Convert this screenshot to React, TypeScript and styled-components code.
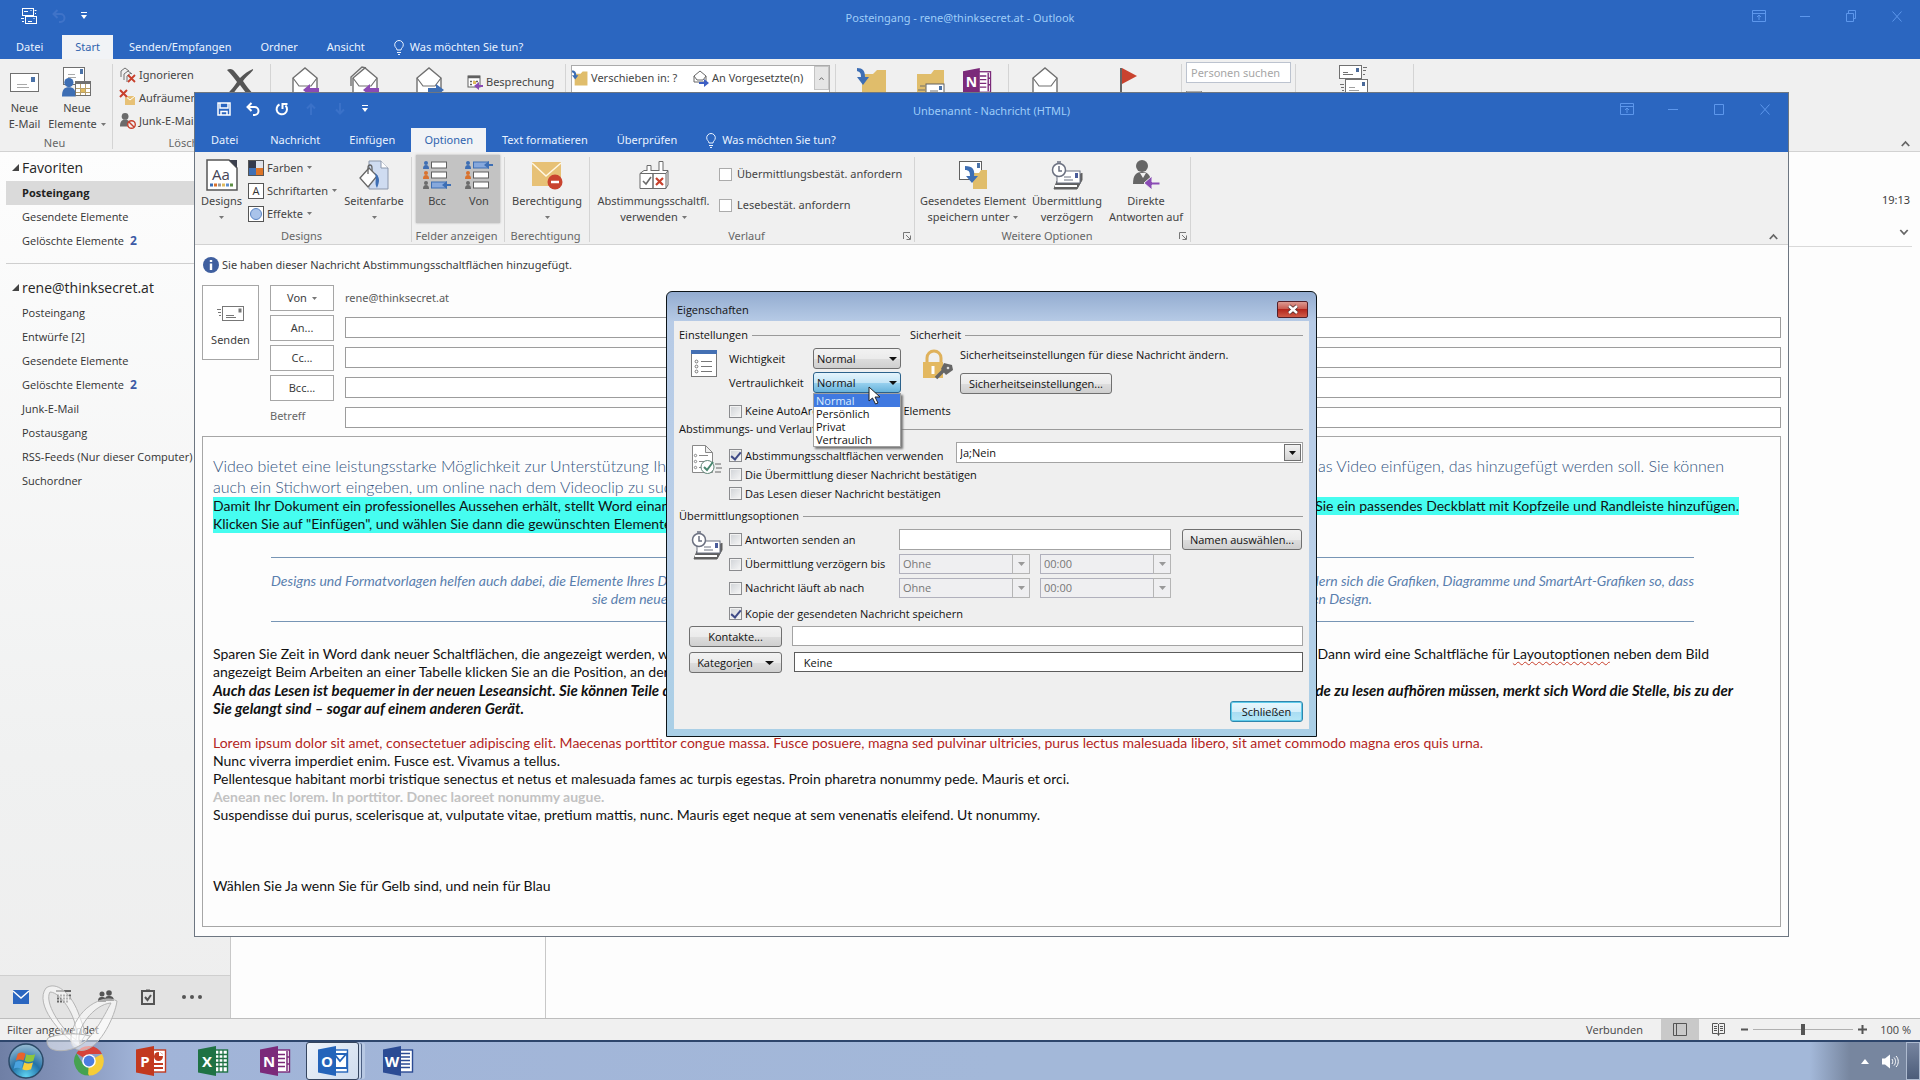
import React, { useState } from "react";
import styled, { createGlobalStyle, css } from "styled-components";

const ui = `"Noto Sans", "Open Sans", sans-serif`;
const compact = `"Open Sans", "Noto Sans", sans-serif`;
const doc = `Lato, "Open Sans", sans-serif`;
const blue = "#2b66c0";

const GlobalStyle = createGlobalStyle`
  * { box-sizing: border-box; }
  body { margin: 0; font-family: ${ui}; font-size: 11px; line-height: 16px; color: #3c3c3c; overflow: hidden; }
  button, input, select { font: inherit; color: inherit; }
  button { cursor: default; }
  ul { list-style: none; margin: 0; padding: 0; }
  p { margin: 0; }
  a { color: inherit; text-decoration: none; }
`;

/* ---------- shared pieces ---------- */

const Svg = styled.svg`
  display: block;
  flex: none;
  overflow: visible;
`;

const Screen = styled.div`
  position: relative;
  display: flex;
  flex-direction: column;
  height: 100vh;
  background: #fdfdfd;
`;

const TitleBar = styled.header`
  display: grid;
  grid-template-columns: 1fr auto 1fr;
  align-items: center;
  height: 35px;
  flex: none;
  background: ${blue};
  color: #9fcdf8;
`;

const QuickAccess = styled.div<{ $pad: number }>`
  display: flex;
  align-items: center;
  gap: 15px;
  padding: 0 0 4px ${(p) => p.$pad}px;
`;

const PlainButton = styled.button`
  display: flex;
  align-items: center;
  justify-content: center;
  padding: 0;
  border: 0;
  background: none;
`;

const Caption = styled.h1`
  margin: 0;
  font-size: 11px;
  font-weight: 400;
`;

const WindowButtons = styled.div<{ $pad: number }>`
  display: flex;
  justify-content: flex-end;
  gap: 30px;
  padding: 0 ${(p) => p.$pad}px 4px 0;
  color: #5d97ec;
`;

const TabRow = styled.nav<{ $pad?: number }>`
  display: flex;
  gap: 3px;
  height: 24px;
  flex: none;
  background: ${blue};
  color: #eaf3ff;
`;

const Tab = styled.button<{ $active?: boolean; $file?: boolean }>`
  display: flex;
  align-items: center;
  gap: 6px;
  padding: 0 ${(p) => (p.$file ? 16 : 13)}px;
  border: 0;
  background: ${(p) => (p.$active ? "#f1f3f6" : "none")};
  color: ${(p) => (p.$active ? "#2f63ae" : "inherit")};
  white-space: nowrap;
`;

const Ribbon = styled.div`
  display: flex;
  height: 93px;
  flex: none;
  background: #f0f0f0;
  border-bottom: 1px solid #d2d2d2;
  color: #444;
`;

const Group = styled.section<{ $w: number }>`
  display: flex;
  flex-direction: column;
  width: ${(p) => p.$w}px;
  flex: none;
  margin: 5px 0 2px;
  border-right: 1px solid #d4d4d4;
`;

const GroupBody = styled.div<{ $pad?: number; $gap?: number }>`
  display: flex;
  align-items: flex-start;
  flex: 1;
  min-height: 0;
  gap: ${(p) => p.$gap ?? 0}px;
  padding-left: ${(p) => p.$pad ?? 0}px;
`;

const GroupFooter = styled.div`
  display: flex;
  align-items: center;
  height: 12px;
  line-height: 12px;
  color: #666;
  padding-right: 3px;
`;

const GroupName = styled.span`
  flex: 1;
  text-align: center;
`;

const BigButton = styled.button<{ $w: number }>`
  display: flex;
  flex-direction: column;
  align-items: center;
  width: ${(p) => p.$w}px;
  padding: 0;
  border: 0;
  background: none;
  white-space: nowrap;
`;

const IconBox = styled.span`
  display: flex;
  align-items: center;
  justify-content: center;
  height: 36px;
`;

const SmallColumn = styled.div<{ $left?: number }>`
  display: flex;
  flex-direction: column;
  gap: 2px;
  padding-left: ${(p) => p.$left ?? 0}px;
`;

const SmallButton = styled.button`
  display: flex;
  align-items: center;
  gap: 3px;
  height: 21px;
  padding: 0;
  border: 0;
  background: none;
  white-space: nowrap;
`;

const LabelLine = styled.span`
  display: flex;
  align-items: center;
  gap: 4px;
  height: 16px;
`;

const Down = ({ size = 5, color = "#777" }: { size?: number; color?: string }) => (
  <Svg width={size} height={size > 6 ? 4 : 3} viewBox="0 0 6 3.6" preserveAspectRatio="none">
    <path d="M0 0h6L3 3.600z" fill={color} />
  </Svg>
);

/* ---------- small drawings ---------- */

const Envelope = ({ w = 29, h = 19 }: { w?: number; h?: number }) => (
  <Svg width={w} height={h} viewBox="0 0 29 19">
    <rect x=".5" y=".5" width="28" height="18" fill="#fff" stroke="#707070" />
    <rect x="21" y="4" width="4" height="5" fill="#4a72a8" />
    <path d="M7 11.500h10M7 14.500h12" stroke="#a9a9a9" />
  </Svg>
);

const Person = ({ x, y, s = 1, fill }: { x: number; y: number; s?: number; fill: string }) => (
  <g transform={`translate(${x} ${y}) scale(${s})`} fill={fill}>
    <circle cx="6" cy="4" r="4" />
    <path d="M0 16c0-6 2-8 6-8s6 2 6 8z" />
  </g>
);

const NewItems = () => (
  <Svg width="30" height="30" viewBox="0 0 30 30">
    <rect x="1.500" y=".5" width="21" height="17" fill="#fff" stroke="#707070" />
    <rect x="18" y="2" width="3" height="5" fill="#4a72a8" />
    <path d="M6 7.500h7M6 10.500h8" stroke="#a9a9a9" />
    <Person x={0} y={11} s={1.15} fill="#3d6eb4" />
    <rect x="13.500" y="14.500" width="15" height="14" fill="#fff" stroke="#707070" />
    <path d="M13 15.500h16" stroke="#707070" strokeWidth="3" />
    <path d="M14 21.500h14M14 25.500h14M18.500 17v11M23.500 17v11" stroke="#b9a06a" />
    <rect x="19" y="22" width="4" height="3" fill="#e0bb5e" />
  </Svg>
);

const OpenMail = ({ arrow, double }: { arrow?: string; double?: boolean }) => (
  <Svg width="30" height="32" viewBox="0 0 30 32">
    {double && <path d="M1 20V11L12 1l4 1" fill="none" stroke="#707070" strokeWidth="1.400" />}
    <path d="M3 30V12L15 2l12 10v18z" fill="#fff" stroke="#707070" strokeWidth="1.400" />
    <path d="M3 12l6 8h12l6-8" fill="none" stroke="#707070" strokeWidth="1.200" />
    {arrow === "left" && <path d="M29 22v4H20v4l-7-6 7-6v4z" fill="#8a4bb5" />}
    {arrow === "right" && <path d="M14 22v4h8v4l8-6-8-6v4z" fill="#3d6eb4" />}
  </Svg>
);

const Ignore = () => (
  <Svg width="16" height="16" viewBox="0 0 16 16" fill="none" stroke="#707070">
    <path d="M1 10V4l4-3 4 3M4 13V7l4-3 4 3M7 15V9l4-3" />
    <path d="M8 8l7 7M15 8l-7 7" stroke="#c8402c" strokeWidth="1.800" />
  </Svg>
);

const CleanUp = () => (
  <Svg width="16" height="16" viewBox="0 0 16 16">
    <path d="M5 6h10v9H5z" fill="#e7c176" />
    <path d="M5 6l5 4 5-4" fill="none" stroke="#fff" />
    <path d="M0 0l7 7M7 0L0 7" stroke="#c8402c" strokeWidth="2" />
  </Svg>
);

const Junk = () => (
  <Svg width="16" height="16" viewBox="0 0 16 16">
    <Person x={0} y={0} s={0.85} fill="#6b6b6b" />
    <circle cx="11.500" cy="11.500" r="3.800" fill="#f0f0f0" stroke="#c8402c" strokeWidth="1.400" />
    <path d="M9 9l5 5" stroke="#c8402c" strokeWidth="1.400" />
  </Svg>
);

const Meeting = () => (
  <Svg width="16" height="16" viewBox="0 0 16 16">
    <rect x="1" y="2" width="12" height="11" fill="#fff" stroke="#606060" />
    <path d="M1 3h12" stroke="#606060" strokeWidth="2.500" />
    <path d="M3 7.500h2m1 0h2m1 0h2M3 10.500h2" stroke="#606060" strokeWidth="1.500" />
    <rect x="6" y="7" width="3" height="3" fill="#e0bb5e" />
    <path d="M16 11v2h-4v3l-5-4 5-4v3z" fill="#8a4bb5" />
  </Svg>
);

const Folder = ({ s = 16, mail }: { s?: number; mail?: boolean }) => (
  <Svg width={s} height={s} viewBox="0 0 30 30">
    <path d={mail ? "M2 7h14l3-4h10v26H2z" : "M5 7h11l4-4h9v26H5z"} fill="#e0bd6b" />
    {mail ? (
      <g>
        <rect x="11" y="17" width="18" height="13" fill="#fff" stroke="#606060" />
        <path d="M5 19h5M3 23h7M15 24h8M15 27h9" stroke="#707070" />
        <rect x="24" y="19" width="3" height="4" fill="#4a72a8" />
      </g>
    ) : (
      <path d="M0 1c6 0 8 3 8 9h4l-6 8-6-8h4c0-4-1-5-4-6z" fill="#3d6eb4" />
    )}
  </Svg>
);

const Supervisor = () => (
  <Svg width="16" height="17" viewBox="0 0 16 17">
    <path d="M1 12V6l6-5 6 5v6z" fill="#fff" stroke="#666" />
    <path d="M1 6l3 4h6l3-4" fill="none" stroke="#666" />
    <path d="M6 12v2h5v3l5-4-5-4v3z" fill="#3d5fc4" />
  </Svg>
);

const OfficeLogo = ({ letter, color, size = 30 }: { letter: string; color: string; size?: number }) => (
  <Svg width={size} height={size} viewBox="0 0 30 30">
    <rect x="16" y="4" width="13.500" height="22" fill="#fff" stroke={color} strokeWidth="1.400" />
    {letter === "O" && <path d="M17 8h12v14H17zM17 9l5 6 7-8" fill="#fff" stroke={color} strokeWidth="1.800" />}
    {letter === "P" && (
      <g fill={color}>
        <circle cx="22.500" cy="10.500" r="4.500" />
        <path d="M23 10V5l5 5z" fill="#fff" />
        <path d="M18 17h9v2h-9zM18 21h9v2h-9z" />
      </g>
    )}
    {letter === "X" && (
      <path d="M17 8.500h12M17 12.500h12M17 16.500h12M17 20.500h12M21 4v22M25 4v22" stroke={color} strokeWidth="1.300" />
    )}
    {letter === "N" && (
      <path d="M18 8.500h7M18 12.500h7M18 16.500h7M18 20.500h7M27 5v20M27 11h3M27 18h3" stroke={color} strokeWidth="1.500" />
    )}
    {letter === "W" && (
      <path d="M18 7.500h9M18 11h9M18 14.500h9M18 18h9M18 21.500h9" stroke={color} strokeWidth="1.300" />
    )}
    <path d="M0 3.500L18 0v30L0 26.500z" fill={color} />
    <text x="9" y="20.500" textAnchor="middle" fontFamily="Open Sans, sans-serif" fontWeight="700" fontSize="15" fill="#fff">
      {letter}
    </text>
  </Svg>
);

const Bulb = () => (
  <Svg width="10" height="15" viewBox="0 0 10 15" fill="none" stroke="#eaf3ff">
    <path d="M3 10C3 8 .7 7.500.7 4.800a4.300 4.300 0 0 1 8.600 0C9.300 7.500 7 8 7 10zM3 12.500h4M4 14.500h2" />
  </Svg>
);

const SendReceive = () => (
  <Svg width="16" height="16" viewBox="0 0 16 16" fill="none" stroke="#fff">
    <rect x="1.500" y=".5" width="11" height="7" />
    <rect x="4.500" y="8.500" width="11" height="7" fill={blue} />
    <path d="M3 3.500h4M13.500 2.500h2M14 5.500h1M0 10.500h3M1 13.500h2M7 13.500h4M9.500 2.500h1M12.500 10.500h1" />
  </Svg>
);

const SendAll = () => (
  <Svg width="30" height="34" viewBox="0 0 30 34" fill="none" stroke="#707070">
    <rect x="1.500" y=".5" width="22" height="13" fill="#fff" />
    <rect x="7.500" y="14.500" width="22" height="14" fill="#fff" />
    <path d="M5 7.500h5M5 9.500h10M25 2.500h4M25 5.500h3M25 9.500h2M2 19.500h4M3 22.500h3M4 25.500h2" />
    <path d="M11 22.500h6M11 25.500h10" stroke="#a0a0a0" />
    <path d="M18 3h3v4h-3zM24 17h3v4h-3z" fill="#4a6a9a" stroke="none" />
  </Svg>
);

const Undo = ({ color }: { color: string }) => (
  <Svg width="14" height="14" viewBox="0 0 14 14" fill="none" stroke={color} strokeWidth="2">
    <path d="M1.500 5h7a4 4 0 0 1 0 8H7M5.500 1l-4 4 4 4" />
  </Svg>
);

const Redo = () => (
  <Svg width="14" height="14" viewBox="0 0 14 14" fill="none" stroke="#fff" strokeWidth="2">
    <path d="M4.500 2.500A5.200 5.200 0 1 0 10.500 3.500M7.500 7V2h5" />
  </Svg>
);

const Save = () => (
  <Svg width="14" height="14" viewBox="0 0 14 14" fill="none" stroke="#fff" strokeWidth="1.500">
    <path d="M1 1h12v12H1zM3 1v5h8V1M4 13V9.500h6V13" />
  </Svg>
);

const ArrowFaint = ({ up }: { up?: boolean }) => (
  <Svg width="14" height="14" viewBox="0 0 14 14" fill="none" stroke="#3a71c8" strokeWidth="2">
    <path d={up ? "M7 13V3M3 6.500l4-4 4 4" : "M7 1v10M3 7.500l4 4 4-4"} />
  </Svg>
);

const Customize = () => (
  <Svg width="6" height="7" viewBox="0 0 6 7" fill="#fff">
    <path d="M0 0h6v1H0zM0 3h6L3 7z" />
  </Svg>
);

const WinIcon = ({ kind }: { kind: "ribbon" | "min" | "max" | "restore" | "close" }) => {
  const d = {
    ribbon: "M1.500 2.500h13v11h-13zM1.500 5.500h13M8 12V7.500M6 9l2-2 2 2",
    min: "M3 8.500h10",
    max: "M3.500 3.500h9v10h-9z",
    restore: "M3.500 5.500h7v8h-7zM5.500 5V2.500h7v8H11",
    close: "M3.500 3.500l9 10M12.500 3.500l-9 10",
  }[kind];
  return (
    <Svg width="16" height="16" viewBox="0 0 16 16" fill="none" stroke="currentColor">
      <path d={d} />
    </Svg>
  );
};

const Chevron = ({ down, size = 9 }: { down?: boolean; size?: number }) => (
  <Svg width={size} height="7" viewBox="0 0 9 7" fill="none" stroke="#666" strokeWidth="1.800">
    <path d={down ? "M.8 1l3.700 4L8.200 1" : "M.8 6l3.700-4 3.700 4"} />
  </Svg>
);

const Launcher = () => (
  <Svg width="8" height="8" viewBox="0 0 8 8" fill="none" stroke="#777">
    <path d="M.5 7V.5H7M3 3l4 4M7.500 3.500v4h-4" />
  </Svg>
);

const DesignsIcon = () => (
  <Svg width="32" height="32" viewBox="0 0 32 32">
    <path d="M1 1h22l8 8v22H1z" fill="#fff" stroke="#555" strokeWidth="1.500" />
    <path d="M23 1h8v8z" fill="#3b3f4d" />
    <text x="15" y="21" textAnchor="middle" fontFamily="Open Sans, sans-serif" fontSize="15" fill="#445">
      Aa
    </text>
    <path d="M4 26h3" stroke="#3d6eb4" strokeWidth="3" />
    <path d="M8 26h3" stroke="#d9722e" strokeWidth="3" />
    <path d="M12 26h3" stroke="#999" strokeWidth="3" />
    <path d="M16 26h3" stroke="#e0bb5e" strokeWidth="3" />
    <path d="M20 26h3" stroke="#5f8fd0" strokeWidth="3" />
    <path d="M24 26h3" stroke="#5e8f45" strokeWidth="3" />
  </Svg>
);

const ColorsIcon = () => (
  <Svg width="16" height="16" viewBox="0 0 16 16">
    <path d="M0 0h8v8H0z" fill="#333a4c" />
    <path d="M8 0h8v8H8z" fill="#dfe3ea" />
    <path d="M0 8h8v8H0z" fill="#3f70b5" />
    <path d="M8 8h8v8H8z" fill="#dd7427" />
    <rect x=".5" y=".5" width="15" height="15" fill="none" stroke="#555" />
  </Svg>
);

const FontsIcon = () => (
  <Svg width="16" height="16" viewBox="0 0 16 16">
    <rect x=".5" y=".5" width="15" height="15" fill="#fff" stroke="#555" />
    <text x="8" y="12" textAnchor="middle" fontFamily="Open Sans, sans-serif" fontSize="11" fill="#333">
      A
    </text>
  </Svg>
);

const EffectsIcon = () => (
  <Svg width="16" height="16" viewBox="0 0 16 16">
    <rect x=".5" y=".5" width="15" height="15" fill="#fff" stroke="#555" />
    <circle cx="8" cy="8" r="5.500" fill="#a9c3ea" stroke="#5a84c4" />
  </Svg>
);

const PageColor = () => (
  <Svg width="30" height="30" viewBox="0 0 30 30">
    <path d="M10 1h12l7 7v21H10z" fill="#cfdcf1" stroke="#8b97ab" />
    <path d="M22 1v7h7" fill="#fff" stroke="#8b97ab" />
    <path d="M1 18L10 8l8 8-9 11z" fill="#fff" stroke="#666" strokeWidth="1.300" />
    <path d="M9 14V8c0-4 4-4 4 0v3" fill="none" stroke="#666" strokeWidth="1.300" />
    <path d="M16 13c5 4 5 8 2 15-3-5 0-9-2-15z" fill="#3d6eb4" />
  </Svg>
);

const Fields = ({ bottom }: { bottom?: boolean }) => (
  <Svg width="28" height="28" viewBox="0 0 28 28">
    {[0, 1, 2].map((i) => {
      const hot = bottom ? i === 2 : i === 0;
      return (
        <g key={i} transform={`translate(0 ${i * 10})`}>
          <Person x={0} y={0} s={0.5} fill={i === 0 ? "#3d6eb4" : i === 1 ? "#d9722e" : "#6b6b6b"} />
          <rect x="8.500" y="1" width="15" height="6" fill={hot ? "#86a8dc" : "#fff"} stroke={hot ? "#3d6eb4" : "#606060"} />
          {hot && <path d="M28 3v2h-4v3l-5-4 5-4v3z" fill="#3d6eb4" />}
        </g>
      );
    })}
  </Svg>
);

const Permission = () => (
  <Svg width="32" height="30" viewBox="0 0 32 30">
    <path d="M1 2h29v24H1z" fill="#e7c176" />
    <path d="M1 3l14 13L30 3" fill="none" stroke="#fff7e2" strokeWidth="1.500" />
    <circle cx="24" cy="22" r="7.500" fill="#c9432f" />
    <path d="M20 22h8" stroke="#fff" strokeWidth="2.500" />
  </Svg>
);

const Ballot = () => (
  <Svg width="30" height="28" viewBox="0 0 30 28" fill="none" stroke="#6b6b6b">
    <path d="M1 12.500h13v15H1zM14 12.500h13v15H14zM1 12.500l4-3h24l-2 3M29 10v14l-2 3" fill="#fff" />
    <path d="M8 10V4.500h4V10M20 10V.5h4V10" fill="#fff" />
    <path d="M4 20l3 3 5-7" strokeWidth="1.600" />
    <path d="M17 17l7 7M24 17l-7 7" stroke="#c8402c" strokeWidth="2.200" />
  </Svg>
);

const SaveSent = () => (
  <Svg width="30" height="30" viewBox="0 0 30 30">
    <rect x="1.500" y="1.500" width="22" height="18" fill="#fff" stroke="#606060" />
    <rect x="19" y="3" width="3" height="5" fill="#4a72a8" />
    <path d="M15 13h6l2-3h6v19H15z" fill="#e0bd6b" />
    <path d="M7 6c8 0 10 4 9 10h4l-6 7-6-7h4c0-4-1-6-5-6z" fill="#3d6eb4" />
  </Svg>
);

const DelaySend = ({ w = 32 }: { w?: number }) => (
  <Svg width={w} height="29" viewBox="0 0 32 29" fill="none" stroke="#6b7080">
    <path d="M6 20l-3 8h23l5-9V12" fill="#606060" stroke="#606060" />
    <rect x="6" y="10" width="23" height="12" fill="#fff" />
    <path d="M4 25h22" stroke="#fff" strokeWidth="2" />
    <rect x="24" y="12" width="3" height="5" fill="#4a5c9a" stroke="none" />
    <path d="M13 16h7M13 19h9" />
    <circle cx="8" cy="9" r="6.500" fill="#fff" strokeWidth="1.500" />
    <path d="M8 5v5h3M6 1h4" strokeWidth="1.500" />
  </Svg>
);

const DirectReply = () => (
  <Svg width="28" height="30" viewBox="0 0 28 30">
    <Person x={1} y={0} s={1.5} fill="#666" />
    <path d="M8 13l3 5 3-5z" fill="#f0f0f0" />
    <path d="M28 22v3h-8v5l-8-7 8-7v6z" fill="#8a4bb5" stroke="#f0f0f0" />
  </Svg>
);

const InfoDot = () => (
  <Svg width="16" height="16" viewBox="0 0 16 16">
    <circle cx="8" cy="8" r="8" fill="#3f5f9f" />
    <path d="M8 3v2M8 6.500V13" stroke="#fff" strokeWidth="2.400" />
  </Svg>
);

/* ---------- Outlook main window ---------- */

const Workspace = styled.div`
  display: grid;
  grid-template-columns: 231px 315px 1fr;
  flex: 1;
  min-height: 0;
`;

const Sidebar = styled.aside`
  display: flex;
  flex-direction: column;
  border-right: 1px solid #c8c8c8;
  background: linear-gradient(#fdfdfd, #f0f1f1 70%, #eeeeee);
  font-family: ${compact};
  color: #333;
`;

const FolderTree = styled.div`
  flex: 1;
  padding: 2px 0 0 6px;
`;

const TreeHeading = styled.h2`
  display: flex;
  align-items: center;
  gap: 3px;
  height: 27px;
  margin: 0;
  padding-left: 6px;
  font-size: 14px;
  font-weight: 400;
  color: #262626;
`;

const FolderItem = styled.a<{ $active?: boolean }>`
  display: flex;
  align-items: center;
  gap: 6px;
  height: 24px;
  padding-left: 16px;
  white-space: nowrap;
  ${(p) => p.$active && css`background: #dadada; font-weight: 700; color: #222;`}
`;

const Count = styled.b`
  font-size: 12px;
  color: #3c5aa5;
`;

const TreeRule = styled.hr`
  height: 1px;
  margin: 10px 0;
  border: 0;
  background: #cfcfcf;
`;

const ModuleBar = styled.nav`
  display: flex;
  align-items: center;
  gap: 27px;
  height: 43px;
  padding-left: 13px;
  border-top: 1px solid #cfcfcf;
  background: #e3e3e3;
`;

const ListColumn = styled.div`
  border-right: 1px solid #c8c8c8;
`;

const Reading = styled.main`
  display: flex;
  flex-direction: column;
  align-items: flex-end;
  gap: 21px;
  height: 95px;
  padding: 40px 2px 0 0;
  margin-right: 8px;
  border-bottom: 1px solid #d9d9d9;
`;

const StatusBar = styled.footer`
  display: flex;
  align-items: center;
  height: 22px;
  flex: none;
  padding: 0 9px 0 7px;
  border-top: 1px solid #bdbdbd;
  background: #f0f0f0;
  font-family: ${compact};
  color: #444;
`;

const Spacer = styled.div`
  flex: 1;
`;

const ViewButton = styled(PlainButton)<{ $on?: boolean }>`
  width: 38px;
  height: 21px;
  background: ${(p) => (p.$on ? "#c9c9c9" : "none")};
`;

const Zoom = styled.input`
  width: 100px;
  height: 12px;
  margin: 0 5px;
  appearance: none;
  background: linear-gradient(#b0b0b0, #b0b0b0) center / 100% 1px no-repeat;
  &::-webkit-slider-thumb {
    appearance: none;
    width: 4px;
    height: 11px;
    background: #555;
  }
`;

const ZoomLevel = styled.span`
  width: 44px;
  text-align: right;
`;

const QuickSteps = styled.div`
  display: grid;
  grid-template-columns: 121px 121px 15px;
  grid-auto-rows: 24px;
  align-items: center;
  height: 74px;
  margin-top: 1px;
  border: 1px solid #ababab;
  background: #fff;
  overflow: hidden;
`;

const QuickScroll = styled(PlainButton)`
  height: 24px;
  background: #e6e6e6;
  border: 1px solid #c4c4c4;
`;

const PeopleSearch = styled.input`
  width: 105px;
  height: 21px;
  padding: 0 4px;
  border: 1px solid #bcc3cf;
  background: #fff;
  &::placeholder { color: #a6a6a6; opacity: 1; }
`;

/* ---------- task bar ---------- */

const TaskBar = styled.div`
  display: flex;
  align-items: center;
  height: 40px;
  flex: none;
  border-top: 2px solid #2e466c;
  background: linear-gradient(90deg, #6f7fa5 0, #8292b8 60px, #a1b4d8 140px, #a3b8d9 1000px, #a3b8d9 calc(100% - 110px), #77869f calc(100% - 70px), #77869f);
`;

const TaskButton = styled.button<{ $active?: boolean; $w: number }>`
  display: flex;
  align-items: center;
  justify-content: center;
  width: ${(p) => p.$w}px;
  height: 38px;
  padding: 0;
  border: 1px solid transparent;
  border-radius: 3px;
  background: none;
  ${(p) =>
    p.$active &&
    css`
      margin-right: 7px;
      border-color: #35455f;
      background: linear-gradient(135deg, #eef3fa, #cfdcee);
      box-shadow: 3px 0 0 -1px #c9d7ec, 4px 0 0 -1px #4b5f83, 7px 0 0 -1px #b7c8e3;
    `}
`;

const StartButton = styled(TaskButton)`
  justify-content: flex-start;
  padding-left: 7px;
`;

const ShowDesktop = styled.button`
  width: 14px;
  height: 38px;
  padding: 0;
  margin-left: 8px;
  border: 1px solid #aebbd0;
  background: linear-gradient(#76849f, #4d5d7a);
`;

const StartOrb = () => (
  <Svg width="36" height="36" viewBox="0 0 37 37">
    <defs>
      <radialGradient id="orb" cx="50%" cy="95%" r="90%">
        <stop offset="0" stopColor="#5fd3f2" />
        <stop offset=".5" stopColor="#2372a8" />
        <stop offset="1" stopColor="#8fb6cf" />
      </radialGradient>
    </defs>
    <circle cx="18.500" cy="18.500" r="17.500" fill="url(#orb)" stroke="#2b4967" strokeWidth="1.500" />
    <path d="M10 11c3-1.500 5-1.500 8 0l-2 7c-3-1.500-5-1.500-8 0z" fill="#e8632b" />
    <path d="M19 11.500c3 1.500 6 1 9 0l-2 7c-3 1-6 1.500-9 0z" fill="#8cc63e" />
    <path d="M7.700 19.500c3-1.500 5-1.500 8 0l-2 7c-3-1.500-5-1.500-8 0z" fill="#4aa3e0" />
    <path d="M16.700 20c3 1.500 6 1 9 0l-2 7c-3 1-6 1.500-9 0z" fill="#f8ce3c" />
  </Svg>
);

const Chrome = () => (
  <Svg width="30" height="30" viewBox="0 0 30 30">
    <path d="M15 15L2.400 7.200A14.600 14.600 0 0 1 28 8H15z" fill="#d6433a" />
    <path d="M15 15L28 8a14.600 14.600 0 0 1-13 21.600z" fill="#f6cd38" />
    <path d="M15 15v14.600A14.600 14.600 0 0 1 2.400 7.200L9 18z" fill="#45a250" />
    <path d="M14 29.600L21 18l-6-3z" fill="#f6cd38" />
    <circle cx="15" cy="15" r="6.800" fill="#fff" />
    <circle cx="15" cy="15" r="5.400" fill="#4c7de0" />
  </Svg>
);

const Watermark = styled.svg`
  position: absolute;
  left: 42px;
  bottom: 28px;
  pointer-events: none;
`;

/* ---------- message window ---------- */

const MessageWindow = styled.section`
  position: absolute;
  inset: 92px 131px 143px 194px;
  display: flex;
  flex-direction: column;
  border: 1px solid #6d7681;
  background: #fdfdfd;
`;

const ToggleArea = styled.div`
  display: flex;
  width: 84px;
  height: 68px;
  margin: -2px 0 0 4px;
  padding: 2px 0 0;
  background: #c3c3c3;
  box-shadow: 0 0 2px #aaa;
`;

const ChoiceColumn = styled.div`
  display: flex;
  flex-direction: column;
  gap: 15px;
  padding: 9px 0 0 6px;
`;

const Choice = styled.label`
  display: flex;
  align-items: center;
  gap: 5px;
  height: 16px;
  white-space: nowrap;
`;

const Box = styled.input`
  width: 13px;
  height: 13px;
  margin: 0;
  appearance: none;
  border: 1px solid #ababab;
  background: #fff;
`;

const CollapseSlot = styled.div`
  display: flex;
  flex: 1;
  align-items: flex-end;
  justify-content: flex-end;
  padding: 0 10px 4px 0;
`;

const InfoBar = styled.div`
  display: flex;
  align-items: center;
  gap: 3px;
  height: 40px;
  flex: none;
  padding-left: 8px;
`;

const Address = styled.div`
  display: grid;
  grid-template-columns: 57px 64px 1fr;
  column-gap: 11px;
  height: 151px;
  flex: none;
  padding: 0 7px;
`;

const AddressColumn = styled.div`
  display: flex;
  flex-direction: column;
  gap: 4px;
`;

const FieldColumn = styled.div`
  display: flex;
  flex-direction: column;
  gap: 9px;
`;

const SendButton = styled.button`
  display: flex;
  flex-direction: column;
  align-items: center;
  gap: 9px;
  height: 75px;
  padding: 20px 0 0;
  border: 1px solid #a6a6a6;
  background: #fff;
`;

const AddressButton = styled.button`
  display: flex;
  align-items: center;
  justify-content: center;
  gap: 5px;
  height: 26px;
  flex: none;
  border: 1px solid #a6a6a6;
  background: #fff;
`;

const SubjectLabel = styled.label`
  height: 26px;
  line-height: 22px;
  color: #666;
`;

const Sender = styled.div`
  height: 23px;
  line-height: 26px;
  color: #5a5a5a;
`;

const AddressInput = styled.input`
  height: 21px;
  width: 100%;
  border: 1px solid #9c9c9c;
  background: #fff;
`;

const Editor = styled.article`
  flex: 1;
  min-height: 0;
  margin: 0 7px 9px;
  padding: 18px 10px 0;
  border: 1px solid #a6a6a6;
  font-family: ${doc};
  font-size: 14px;
  line-height: 18px;
  color: #111;
`;

const Line = styled.div<{ $right?: number }>`
  display: flex;
  justify-content: space-between;
  margin-right: ${(p) => p.$right ?? 0}px;
  white-space: nowrap;
`;

const Lead = styled.div`
  font-size: 16px;
  line-height: 21px;
  font-weight: 300;
  color: #33547f;
`;

const Marked = styled.span`
  background: #46fdf0;
`;

const MarkedLine = styled(Line)`
  background: #46fdf0;
`;

const Quote = styled.blockquote`
  margin: 24px 76px 23px 58px;
  padding: 14px 0 13px;
  border: solid #7795b5;
  border-width: 1px 0;
  font-style: italic;
  color: #5a7fae;
`;

const CenterLine = styled(Line)`
  margin: 0 322px 0 321px;
`;

const Strong = styled.div`
  font-size: 15px;
  font-weight: 700;
  font-style: italic;
`;

const Tinted = styled.p<{ $c: string; $bold?: boolean }>`
  color: ${(p) => p.$c};
  font-weight: ${(p) => (p.$bold ? 700 : 400)};
`;

const Block = styled.div`
  margin-bottom: 17px;
`;

const Last = styled.p`
  padding-top: 36px;
`;

const Misspelled = styled.span`
  text-decoration: underline wavy #c8402c 1px;
  text-underline-offset: 2px;
`;

/* ---------- properties dialog ---------- */

const Dialog = styled.section`
  position: absolute;
  left: 666px;
  top: 291px;
  width: 651px;
  height: 446px;
  display: flex;
  flex-direction: column;
  padding: 0 7px 7px;
  border: 1px solid #0c1418;
  border-radius: 6px 6px 0 0;
  background: linear-gradient(#93acd0, #b7cbe6 30px, #b9cfe8 60%, #a9cfe6);
  font-family: ${compact};
  color: #111;
`;

const DialogTitle = styled.header`
  display: flex;
  justify-content: space-between;
  align-items: center;
  height: 29px;
  flex: none;
  padding: 6px 1px 0 3px;
`;

const DialogName = styled.h2`
  margin: 0;
  font-size: 11px;
  font-weight: 400;
`;

const CloseButton = styled.button`
  display: flex;
  align-items: center;
  justify-content: center;
  width: 31px;
  height: 17px;
  padding: 0;
  border: 1px solid #53202a;
  border-radius: 2px;
  background: linear-gradient(#dc9a92, #c9594e 48%, #b4261c 50%, #cf5b48);
`;

const Client = styled.div`
  flex: 1;
  display: flex;
  flex-direction: column;
  padding: 6px 6px 7px 5px;
  background: #efefef;
`;

const SectionHead = styled.h3`
  display: flex;
  align-items: center;
  gap: 4px;
  height: 16px;
  margin: 0;
  font-size: 11px;
  font-weight: 400;
  white-space: nowrap;
  &::after {
    content: "";
    flex: 1;
    height: 1px;
    background: #9a9a9a;
  }
`;

const TopColumns = styled.div`
  display: grid;
  grid-template-columns: 221px 1fr;
  column-gap: 10px;
  height: 94px;
`;

const SettingsGrid = styled.div`
  display: grid;
  grid-template-columns: 50px 84px 88px;
  grid-template-rows: 21px 21px 16px;
  row-gap: 3px;
  align-items: center;
  padding-top: 5px;
`;

const IconCell = styled.div<{ $rows?: number }>`
  grid-row: span ${(p) => p.$rows ?? 1};
  align-self: start;
  padding: 2px 0 0 12px;
`;

const Combo = styled.div`
  position: relative;
  display: flex;
`;

const ComboArrow = styled.span`
  position: absolute;
  right: 4px;
  top: 9px;
  pointer-events: none;
`;

const WinSelect = styled.select<{ $open?: boolean }>`
  width: 100%;
  height: 21px;
  padding: 0 3px;
  appearance: none;
  border: 1px solid ${(p) => (p.$open ? "#2c628b" : "#707070")};
  border-radius: 3px;
  background: ${(p) =>
    p.$open
      ? "linear-gradient(#e5f4fc, #c4e5f6 50%, #98d1ef 52%, #68b3db)"
      : "linear-gradient(#f2f2f2, #ebebeb 50%, #dddddd 52%, #cfcfcf)"};
`;

const Options = styled.ul`
  position: absolute;
  left: 0;
  top: 21px;
  z-index: 2;
  width: 88px;
  border: 1px solid #a0a0a0;
  background: #fff;
  box-shadow: 2px 2px 2px #777;
`;

const Option = styled.li<{ $on?: boolean }>`
  height: 13px;
  padding-left: 2px;
  line-height: 13px;
  ${(p) => p.$on && css`background: #4079e0; color: #d9ecff;`}
`;

const Cursor = styled.svg`
  position: absolute;
  left: 55px;
  top: 14px;
  z-index: 3;
`;

const Tick = styled.label`
  display: flex;
  align-items: center;
  gap: 3px;
  height: 19px;
  white-space: nowrap;
`;

const ArchiveTick = styled(Tick)`
  grid-column: 2 / 4;
  padding-top: 14px;
`;

const TickBox = styled.input`
  display: grid;
  place-content: center;
  width: 13px;
  height: 13px;
  flex: none;
  margin: 0;
  appearance: none;
  border: 1px solid #8a8b8e;
  background: linear-gradient(135deg, #cfd2d6, #f7f7f7);
  box-shadow: inset 0 0 0 1px #f2f2f2;
  &:checked::after {
    content: "";
    width: 4px;
    height: 8px;
    margin-bottom: 2px;
    border: solid #3f4a86;
    border-width: 0 2px 2px 0;
    transform: rotate(40deg);
  }
`;

const Security = styled.div`
  display: grid;
  grid-template-columns: 50px 1fr;
  align-items: start;
  padding-top: 4px;
`;

const SecurityText = styled.div`
  display: flex;
  flex-direction: column;
  align-items: flex-start;
  gap: 10px;
`;

const WinButton = styled.button<{ $w: number; $primary?: boolean }>`
  display: flex;
  align-items: center;
  justify-content: center;
  gap: 12px;
  width: ${(p) => p.$w}px;
  height: 21px;
  flex: none;
  padding: 0;
  border: 1px solid ${(p) => (p.$primary ? "#2f86ad" : "#707070")};
  border-radius: 3px;
  background: ${(p) =>
    p.$primary
      ? "linear-gradient(#e9f7fd, #d5effa 50%, #a9dcf2 52%, #b6e7f7)"
      : "linear-gradient(#f2f2f2, #ebebeb 50%, #dddddd 52%, #cfcfcf)"};
  box-shadow: ${(p) => (p.$primary ? "inset 0 0 0 1px #5fcbea" : "none")};
  white-space: nowrap;
`;

const VotingGrid = styled.div`
  display: grid;
  grid-template-columns: 50px 227px 1fr;
  height: 71px;
  padding-top: 5px;
`;

const TickColumn = styled.div`
  padding-top: 4px;
`;

const TextField = styled.input<{ $h?: number; $dark?: boolean }>`
  width: 100%;
  height: ${(p) => p.$h ?? 21}px;
  padding: 0 3px;
  border: 1px solid ${(p) => (p.$dark ? "#5c5c5c" : "#a3a3a3")};
  background: #fff;
`;

const DropButton = styled.button`
  position: absolute;
  right: 2px;
  top: 2px;
  display: flex;
  align-items: center;
  justify-content: center;
  width: 17px;
  height: 17px;
  padding: 0;
  border: 1px solid #707070;
  background: linear-gradient(#f2f2f2, #d3d3d3);
`;

const DeliveryGrid = styled.div`
  display: grid;
  grid-template-columns: 50px 170px 131px 131px 120px;
  grid-template-rows: 21px 20px 20px;
  row-gap: 4px;
  align-items: center;
  padding-top: 5px;
`;

const ReplyField = styled.div`
  grid-column: 3 / 5;
  margin-right: -10px;
`;

const Disabled = styled.div<{ $date?: boolean }>`
  position: relative;
  display: flex;
  margin: ${(p) => (p.$date ? "0" : "0 -10px 0 10px")};
`;

const DisabledSelect = styled.select`
  width: 100%;
  height: 20px;
  padding: 0 3px;
  appearance: none;
  border: 1px solid #b0b0bc;
  background: #efeff1;
  color: #777;
  opacity: 1;
`;

const DisabledArrow = styled.span`
  position: absolute;
  right: 0;
  top: 0;
  display: flex;
  align-items: center;
  justify-content: center;
  width: 18px;
  height: 20px;
  border: 1px solid #b5b5b5;
  pointer-events: none;
`;

const NamesCell = styled.div`
  margin-left: 21px;
`;

const CopyTick = styled(Tick)`
  margin: 6px 0 3px 50px;
`;

const BottomRow = styled.div<{ $gap: number }>`
  display: flex;
  gap: ${(p) => p.$gap}px;
  height: 26px;
  padding-left: 10px;
  align-items: flex-start;
`;

const Actions = styled.div`
  display: flex;
  justify-content: flex-end;
  margin-top: auto;
`;

const SettingsIcon = () => (
  <Svg width="26" height="28" viewBox="0 0 26 28" fill="none" stroke="#777">
    <rect x=".5" y=".5" width="25" height="26" fill="#fff" />
    <path d="M0 2h26" stroke="#4470b3" strokeWidth="4" />
    <path d="M10 11.500h11M10 16.500h11M10 21.500h11" />
    <circle cx="5.500" cy="11.500" r="1.400" />
    <circle cx="5.500" cy="16.500" r="1.400" />
    <circle cx="5.500" cy="21.500" r="1.400" />
  </Svg>
);

const LockIcon = () => (
  <Svg width="32" height="32" viewBox="0 0 32 32">
    <path d="M5 14V9a7 7 0 0 1 14 0v5" fill="none" stroke="#dfb15b" strokeWidth="3" />
    <rect x="1" y="13" width="20" height="16" fill="#e3b860" />
    <path d="M11 17v8" stroke="#fff" strokeWidth="3" />
    <path d="M23 20L14 29" stroke="#666" strokeWidth="3.500" />
    <path d="M22 14l8 2 1 5-7 5-5-6z" fill="#666" />
    <circle cx="26" cy="19" r="1.300" fill="#ddd" />
  </Svg>
);

const VoteIcon = () => (
  <Svg width="31" height="31" viewBox="0 0 31 31" fill="none" stroke="#888">
    <path d="M1.500 1.500h13l7 7v20h-20zM14.500 1.500v7h7" fill="#fff" />
    <path d="M8 11.500h9M8 17.500h5M8 23.500h3" />
    <circle cx="4.500" cy="11.500" r="1.200" />
    <circle cx="4.500" cy="17.500" r="1.200" />
    <circle cx="4.500" cy="23.500" r="1.200" />
    <circle cx="16.500" cy="23" r="6.500" fill="#fff" stroke="#5f8577" />
    <path d="M13 23l3 3 6-8" stroke="#4a8870" strokeWidth="2" />
    <path d="M24 20h6M25 24h6M24 28h6" stroke="#666" />
  </Svg>
);

const PropertiesDialog = () => {
  const [vote, setVote] = useState(true);
  const [copy, setCopy] = useState(true);
  return (
    <Dialog role="dialog" aria-labelledby="dlg-title">
      <DialogTitle>
        <DialogName id="dlg-title">Eigenschaften</DialogName>
        <CloseButton aria-label="Dialog schließen">
          <Svg width="10" height="9" viewBox="0 0 10 9">
            <path d="M1 1l8 7M9 1L1 8" stroke="#4b2a2a" strokeWidth="4" />
            <path d="M1 1l8 7M9 1L1 8" stroke="#fff" strokeWidth="2.500" />
          </Svg>
        </CloseButton>
      </DialogTitle>
      <Client>
        <TopColumns>
          <div>
            <SectionHead>Einstellungen</SectionHead>
            <SettingsGrid>
              <IconCell $rows={3}>
                <SettingsIcon />
              </IconCell>
              <label htmlFor="importance">Wichtigkeit</label>
              <Combo>
                <WinSelect id="importance">
                  <option>Normal</option>
                </WinSelect>
                <ComboArrow><Down size={8} color="#111" /></ComboArrow>
              </Combo>
              <label htmlFor="sensitivity">Vertraulichkeit</label>
              <Combo>
                <WinSelect id="sensitivity" $open>
                  <option>Normal</option>
                </WinSelect>
                <ComboArrow><Down size={8} color="#111" /></ComboArrow>
                <Options role="listbox" aria-label="Vertraulichkeit">
                  {["Normal", "Persönlich", "Privat", "Vertraulich"].map((o, i) => (
                    <Option key={o} role="option" aria-selected={i === 0} $on={i === 0}>{o}</Option>
                  ))}
                </Options>
                <Cursor width="13" height="19" viewBox="0 0 13 19">
                  <path d="M1 1v14l3.500-3 3 6 2.500-1-3-6H12z" fill="#fff" stroke="#222" />
                </Cursor>
              </Combo>
              <ArchiveTick>
                <TickBox type="checkbox" />
                Keine AutoArchivierung dieses Elements
              </ArchiveTick>
            </SettingsGrid>
          </div>
          <div>
            <SectionHead>Sicherheit</SectionHead>
            <Security>
              <IconCell><LockIcon /></IconCell>
              <SecurityText>
                <span>Sicherheitseinstellungen für diese Nachricht ändern.</span>
                <WinButton $w={152}>Sicherheitseinstellungen...</WinButton>
              </SecurityText>
            </Security>
          </div>
        </TopColumns>

        <SectionHead>Abstimmungs- und Verlaufsoptionen</SectionHead>
        <VotingGrid>
          <IconCell><VoteIcon /></IconCell>
          <TickColumn>
            <Tick>
              <TickBox type="checkbox" checked={vote} onChange={() => setVote(!vote)} />
              Abstimmungsschaltflächen verwenden
            </Tick>
            <Tick><TickBox type="checkbox" />Die Übermittlung dieser Nachricht bestätigen</Tick>
            <Tick><TickBox type="checkbox" />Das Lesen dieser Nachricht bestätigen</Tick>
          </TickColumn>
          <Combo>
            <TextField aria-label="Abstimmungsschaltflächen" defaultValue="Ja;Nein" />
            <DropButton aria-label="Auswahl öffnen"><Down size={7} color="#111" /></DropButton>
          </Combo>
        </VotingGrid>

        <SectionHead>Übermittlungsoptionen</SectionHead>
        <DeliveryGrid>
          <IconCell $rows={3}><DelaySend /></IconCell>
          <Tick><TickBox type="checkbox" />Antworten senden an</Tick>
          <ReplyField><TextField aria-label="Antworten senden an" /></ReplyField>
          <NamesCell><WinButton $w={120}>Namen auswählen...</WinButton></NamesCell>
          {["Übermittlung verzögern bis", "Nachricht läuft ab nach"].map((name) => (
            <React.Fragment key={name}>
              <Tick><TickBox type="checkbox" />{name}</Tick>
              <Disabled $date>
                <DisabledSelect disabled aria-label={`${name}: Datum`}><option>Ohne</option></DisabledSelect>
                <DisabledArrow><Down size={7} color="#999" /></DisabledArrow>
              </Disabled>
              <Disabled>
                <DisabledSelect disabled aria-label={`${name}: Uhrzeit`}><option>00:00</option></DisabledSelect>
                <DisabledArrow><Down size={7} color="#999" /></DisabledArrow>
              </Disabled>
              <span />
            </React.Fragment>
          ))}
        </DeliveryGrid>
        <CopyTick>
          <TickBox type="checkbox" checked={copy} onChange={() => setCopy(!copy)} />
          Kopie der gesendeten Nachricht speichern
        </CopyTick>
        <BottomRow $gap={10}>
          <WinButton $w={93}>Kontakte...</WinButton>
          <TextField $h={20} aria-label="Kontakte" />
        </BottomRow>
        <BottomRow $gap={12}>
          <WinButton $w={93}>
            <span>Kategor<u>i</u>en</span>
            <Down size={9} color="#111" />
          </WinButton>
          <TextField $h={20} $dark aria-label="Kategorien" defaultValue="  Keine" />
        </BottomRow>
        <Actions><WinButton $w={73} $primary>Schließen</WinButton></Actions>
      </Client>
    </Dialog>
  );
};

const MessagePane = () => (
  <MessageWindow>
    <TitleBar>
      <QuickAccess $pad={22}>
        <PlainButton aria-label="Speichern"><Save /></PlainButton>
        <PlainButton aria-label="Rückgängig"><Undo color="#fff" /></PlainButton>
        <PlainButton aria-label="Wiederholen"><Redo /></PlainButton>
        <PlainButton aria-label="Vorheriges Element"><ArrowFaint up /></PlainButton>
        <PlainButton aria-label="Nächstes Element"><ArrowFaint /></PlainButton>
        <PlainButton aria-label="Anpassen"><Customize /></PlainButton>
      </QuickAccess>
      <Caption>Unbenannt - Nachricht (HTML)</Caption>
      <WindowButtons $pad={15}>
        <PlainButton aria-label="Menübandoptionen"><WinIcon kind="ribbon" /></PlainButton>
        <PlainButton aria-label="Minimieren"><WinIcon kind="min" /></PlainButton>
        <PlainButton aria-label="Maximieren"><WinIcon kind="max" /></PlainButton>
        <PlainButton aria-label="Schließen"><WinIcon kind="close" /></PlainButton>
      </WindowButtons>
    </TitleBar>
    <TabRow>
      <Tab $file>Datei</Tab>
      <Tab>Nachricht</Tab>
      <Tab>Einfügen</Tab>
      <Tab $active>Optionen</Tab>
      <Tab>Text formatieren</Tab>
      <Tab>Überprüfen</Tab>
      <Tab><Bulb />Was möchten Sie tun?</Tab>
    </TabRow>
    <Ribbon>
      <Group $w={217}>
        <GroupBody>
          <BigButton $w={53}><IconBox><DesignsIcon /></IconBox>Designs<LabelLine><Down /></LabelLine></BigButton>
          <SmallColumn>
            <SmallButton><ColorsIcon /><LabelLine>Farben<Down /></LabelLine></SmallButton>
            <SmallButton><FontsIcon /><LabelLine>Schriftarten<Down /></LabelLine></SmallButton>
            <SmallButton><EffectsIcon /><LabelLine>Effekte<Down /></LabelLine></SmallButton>
          </SmallColumn>
          <Spacer />
          <BigButton $w={74}><IconBox><PageColor /></IconBox>Seitenfarbe<LabelLine><Down /></LabelLine></BigButton>
        </GroupBody>
        <GroupFooter><GroupName>Designs</GroupName></GroupFooter>
      </Group>
      <Group $w={93}>
        <GroupBody>
          <ToggleArea>
            <BigButton $w={42}><IconBox><Fields bottom /></IconBox>Bcc</BigButton>
            <BigButton $w={42}><IconBox><Fields /></IconBox>Von</BigButton>
          </ToggleArea>
        </GroupBody>
        <GroupFooter><GroupName>Felder anzeigen</GroupName></GroupFooter>
      </Group>
      <Group $w={85}>
        <GroupBody>
          <BigButton $w={84}><IconBox><Permission /></IconBox>Berechtigung<LabelLine><Down /></LabelLine></BigButton>
        </GroupBody>
        <GroupFooter><GroupName>Berechtigung</GroupName></GroupFooter>
      </Group>
      <Group $w={325}>
        <GroupBody $pad={4}>
          <BigButton $w={119}>
            <IconBox><Ballot /></IconBox>Abstimmungsschaltfl.<LabelLine>verwenden<Down /></LabelLine>
          </BigButton>
          <ChoiceColumn>
            <Choice><Box type="checkbox" />Übermittlungsbestät. anfordern</Choice>
            <Choice><Box type="checkbox" />Lesebestät. anfordern</Choice>
          </ChoiceColumn>
        </GroupBody>
        <GroupFooter><GroupName>Verlauf</GroupName><Launcher /></GroupFooter>
      </Group>
      <Group $w={276}>
        <GroupBody $pad={3}>
          <BigButton $w={110}>
            <IconBox><SaveSent /></IconBox>Gesendetes Element<LabelLine>speichern unter<Down /></LabelLine>
          </BigButton>
          <BigButton $w={78}><IconBox><DelaySend /></IconBox>Übermittlung<LabelLine>verzögern</LabelLine></BigButton>
          <BigButton $w={80}><IconBox><DirectReply /></IconBox>Direkte<LabelLine>Antworten auf</LabelLine></BigButton>
        </GroupBody>
        <GroupFooter><GroupName>Weitere Optionen</GroupName><Launcher /></GroupFooter>
      </Group>
      <CollapseSlot><PlainButton aria-label="Menüband reduzieren"><Chevron /></PlainButton></CollapseSlot>
    </Ribbon>
    <InfoBar><InfoDot />Sie haben dieser Nachricht Abstimmungsschaltflächen hinzugefügt.</InfoBar>
    <Address>
      <SendButton>
        <Svg width="28" height="17" viewBox="0 0 28 17" fill="none" stroke="#777">
          <rect x="5.500" y=".5" width="21" height="14" fill="#fff" />
          <path d="M0 3.500h4M1 6.500h3M2 9.500h2M9 9.500h8M9 11.500h10" />
          <rect x="22" y="3" width="2" height="3" fill="#777" />
        </Svg>
        Senden
      </SendButton>
      <AddressColumn>
        <AddressButton>Von<Down /></AddressButton>
        <AddressButton>An...</AddressButton>
        <AddressButton>Cc...</AddressButton>
        <AddressButton>Bcc...</AddressButton>
        <SubjectLabel htmlFor="subject">Betreff</SubjectLabel>
      </AddressColumn>
      <FieldColumn>
        <Sender>rene@thinksecret.at</Sender>
        <AddressInput aria-label="An" />
        <AddressInput aria-label="Cc" />
        <AddressInput aria-label="Bcc" />
        <AddressInput id="subject" />
      </FieldColumn>
    </Address>
    <Editor>
      <Lead>
        <Line $right={46}>
          <span>Video bietet eine leistungsstarke Möglichkeit zur Unterstützung Ihres</span>
          <span>das Video einfügen, das hinzugefügt werden soll. Sie können</span>
        </Line>
        <Line><span>auch ein Stichwort eingeben, um online nach dem Videoclip zu suchen,</span></Line>
      </Lead>
      <MarkedLine $right={31}>
        <span>Damit Ihr Dokument ein professionelles Aussehen erhält, stellt Word einander</span>
        <span>können Sie ein passendes Deckblatt mit Kopfzeile und Randleiste hinzufügen.</span>
      </MarkedLine>
      <Line><Marked>Klicken Sie auf "Einfügen", und wählen Sie dann die gewünschten Elemente aus</Marked></Line>
      <Quote>
        <Line>
          <span>Designs und Formatvorlagen helfen auch dabei, die Elemente Ihres Dokuments</span>
          <span>ändern sich die Grafiken, Diagramme und SmartArt-Grafiken so, dass</span>
        </Line>
        <CenterLine>
          <span>sie dem neuen</span>
          <span>neuen Design.</span>
        </CenterLine>
      </Quote>
      <Block>
        <Line $right={61}>
          <span>Sparen Sie Zeit in Word dank neuer Schaltflächen, die angezeigt werden, wo Sie</span>
          <span>Bild. Dann wird eine Schaltfläche für <Misspelled>Layoutoptionen</Misspelled> neben dem Bild</span>
        </Line>
        <p>angezeigt Beim Arbeiten an einer Tabelle klicken Sie an die Position, an der Sie</p>
        <Strong>
          <Line $right={37}>
            <span>Auch das Lesen ist bequemer in der neuen Leseansicht. Sie können Teile des</span>
            <span>Ende zu lesen aufhören müssen, merkt sich Word die Stelle, bis zu der</span>
          </Line>
          Sie gelangt sind – sogar auf einem anderen Gerät.
        </Strong>
      </Block>
      <Block>
        <Tinted $c="#b3261e">
          Lorem ipsum dolor sit amet, consectetuer adipiscing elit. Maecenas porttitor congue massa. Fusce posuere, magna sed
          pulvinar ultricies, purus lectus malesuada libero, sit amet commodo magna eros quis urna.
        </Tinted>
        <p>Nunc viverra imperdiet enim. Fusce est. Vivamus a tellus.</p>
        <p>Pellentesque habitant morbi tristique senectus et netus et malesuada fames ac turpis egestas. Proin pharetra nonummy pede. Mauris et orci.</p>
        <Tinted $c="#c2c2c2" $bold>Aenean nec lorem. In porttitor. Donec laoreet nonummy augue.</Tinted>
        <p>Suspendisse dui purus, scelerisque at, vulputate vitae, pretium mattis, nunc. Mauris eget neque at sem venenatis eleifend. Ut nonummy.</p>
      </Block>
      <Last>Wählen Sie Ja wenn Sie für Gelb sind, und nein für Blau</Last>
    </Editor>
  </MessageWindow>
);

const TreeArrow = () => (
  <Svg width="7" height="7" viewBox="0 0 7 7"><path d="M7 0v7H0z" fill="#444" /></Svg>
);

const App = () => (
  <>
    <GlobalStyle />
    <Screen>
      <TitleBar>
        <QuickAccess $pad={21}>
          <PlainButton aria-label="Alle Ordner senden/empfangen"><SendReceive /></PlainButton>
          <PlainButton aria-label="Rückgängig"><Undo color="#3f73c8" /></PlainButton>
          <PlainButton aria-label="Anpassen"><Customize /></PlainButton>
        </QuickAccess>
        <Caption>Posteingang - rene@thinksecret.at - Outlook</Caption>
        <WindowButtons $pad={15}>
          <PlainButton aria-label="Menübandoptionen"><WinIcon kind="ribbon" /></PlainButton>
          <PlainButton aria-label="Minimieren"><WinIcon kind="min" /></PlainButton>
          <PlainButton aria-label="Verkleinern"><WinIcon kind="restore" /></PlainButton>
          <PlainButton aria-label="Schließen"><WinIcon kind="close" /></PlainButton>
        </WindowButtons>
      </TitleBar>
      <TabRow>
        <Tab $file>Datei</Tab>
        <Tab $active>Start</Tab>
        <Tab>Senden/Empfangen</Tab>
        <Tab>Ordner</Tab>
        <Tab>Ansicht</Tab>
        <Tab><Bulb />Was möchten Sie tun?</Tab>
      </TabRow>
      <Ribbon>
        <Group $w={113}>
          <GroupBody>
            <BigButton $w={49}><IconBox><Envelope /></IconBox>Neue<LabelLine>E-Mail</LabelLine></BigButton>
            <BigButton $w={56}><IconBox><NewItems /></IconBox>Neue<LabelLine>Elemente<Down /></LabelLine></BigButton>
          </GroupBody>
          <GroupFooter><GroupName>Neu</GroupName></GroupFooter>
        </Group>
        <Group $w={158}>
          <GroupBody $pad={7}>
            <SmallColumn>
              <SmallButton><Ignore />Ignorieren</SmallButton>
              <SmallButton><CleanUp />Aufräumen</SmallButton>
              <SmallButton><Junk />Junk-E-Mail</SmallButton>
            </SmallColumn>
            <Spacer />
            <BigButton $w={60} aria-label="Löschen">
              <IconBox>
                <Svg width="28" height="28" viewBox="0 0 28 28">
                  <path d="M1 2c3-2 6-1 8 2l5 6C18 6 22 3 27 1c1 2-5 5-10 12 3 5 7 9 10 13-2 2-5 1-7-1l-6-8c-4 4-6 8-8 10-3 0-4-2-2-4 3-3 5-6 7-9C8 10 5 6 1 2z" fill="#555" />
                </Svg>
              </IconBox>
            </BigButton>
          </GroupBody>
          <GroupFooter><GroupName>Löschen</GroupName></GroupFooter>
        </Group>
        <Group $w={295}>
          <GroupBody $pad={4}>
            <BigButton $w={60} aria-label="Antworten"><IconBox><OpenMail arrow="left" /></IconBox></BigButton>
            <BigButton $w={60} aria-label="Allen antworten"><IconBox><OpenMail arrow="left" double /></IconBox></BigButton>
            <BigButton $w={68} aria-label="Weiterleiten"><IconBox><OpenMail arrow="right" /></IconBox></BigButton>
            <ChoiceSlot><SmallButton><Meeting />Besprechung</SmallButton></ChoiceSlot>
          </GroupBody>
        </Group>
        <Group $w={270}>
          <GroupBody $pad={5}>
            <QuickSteps>
              <SmallButton><Folder />Verschieben in: ?</SmallButton>
              <SmallButton><Supervisor />An Vorgesetzte(n)</SmallButton>
              <QuickScroll aria-label="Nach oben"><Chevron size={5} /></QuickScroll>
              <SmallButton aria-label="Team-E-Mail"><Envelope w={16} h={13} /></SmallButton>
              <SmallButton aria-label="Antworten und löschen"><Envelope w={16} h={13} /></SmallButton>
            </QuickSteps>
          </GroupBody>
        </Group>
        <Group $w={173}>
          <GroupBody $pad={7}>
            <BigButton $w={58} aria-label="Verschieben"><IconBox><Folder s={30} /></IconBox></BigButton>
            <BigButton $w={58} aria-label="Regeln"><IconBox><Folder s={30} mail /></IconBox></BigButton>
            <BigButton $w={36} aria-label="OneNote"><IconBox><OfficeLogo letter="N" color="#7b2a7a" size={28} /></IconBox></BigButton>
          </GroupBody>
        </Group>
        <Group $w={173}>
          <GroupBody $pad={6}>
            <BigButton $w={60} aria-label="Ungelesen"><IconBox><OpenMail /></IconBox></BigButton>
            <Spacer />
            <BigButton $w={104} aria-label="Zur Nachverfolgung">
              <IconBox>
                <Svg width="20" height="30" viewBox="0 0 20 30">
                  <path d="M2 1v29" stroke="#666" strokeWidth="2" />
                  <path d="M3 1l15 8-15 8z" fill="#c9432f" />
                </Svg>
              </IconBox>
            </BigButton>
          </GroupBody>
        </Group>
        <Group $w={114}>
          <SearchSlot>
            <PeopleSearch aria-label="Personen suchen" placeholder="Personen suchen" />
            <SmallButton aria-label="Adressbuch"><Envelope w={16} h={13} /></SmallButton>
          </SearchSlot>
        </Group>
        <Group $w={118}>
          <GroupBody>
            <BigButton $w={114} aria-label="Alle Ordner senden/empfangen"><IconBox><SendAll /></IconBox></BigButton>
          </GroupBody>
        </Group>
        <CollapseSlot><PlainButton aria-label="Menüband reduzieren"><Chevron /></PlainButton></CollapseSlot>
      </Ribbon>
      <Workspace>
        <Sidebar>
          <FolderTree>
            <TreeHeading><TreeArrow />Favoriten</TreeHeading>
            <FolderItem href="#" $active>Posteingang</FolderItem>
            <FolderItem href="#">Gesendete Elemente</FolderItem>
            <FolderItem href="#">Gelöschte Elemente <Count>2</Count></FolderItem>
            <TreeRule />
            <TreeHeading><TreeArrow />rene@thinksecret.at</TreeHeading>
            <FolderItem href="#">Posteingang</FolderItem>
            <FolderItem href="#">Entwürfe [2]</FolderItem>
            <FolderItem href="#">Gesendete Elemente</FolderItem>
            <FolderItem href="#">Gelöschte Elemente <Count>2</Count></FolderItem>
            <FolderItem href="#">Junk-E-Mail</FolderItem>
            <FolderItem href="#">Postausgang</FolderItem>
            <FolderItem href="#">RSS-Feeds (Nur dieser Computer)</FolderItem>
            <FolderItem href="#">Suchordner</FolderItem>
          </FolderTree>
          <ModuleBar>
            <PlainButton aria-label="E-Mail">
              <Svg width="16" height="14" viewBox="0 0 16 14"><path d="M0 0h16v14H0z" fill="#2b66c0" /><path d="M0 1l8 7 8-7" fill="none" stroke="#fff" strokeWidth="1.400" /></Svg>
            </PlainButton>
            <PlainButton aria-label="Kalender">
              <Svg width="15" height="14" viewBox="0 0 15 14" fill="#666"><path d="M0 0h15v2H0z" /><path d="M1 5.500h14M1 8.500h14M1 11.500h12" stroke="#666" strokeWidth="2" strokeDasharray="2 1" /></Svg>
            </PlainButton>
            <PlainButton aria-label="Personen">
              <Svg width="16" height="14" viewBox="0 0 16 14" fill="#555"><circle cx="4" cy="4" r="2.500" /><circle cx="11" cy="3" r="2.800" /><path d="M0 12c0-4 1-5 4-5s4 1 4 5zM7 11c0-4 1-5 4-5s5 1 5 5z" /></Svg>
            </PlainButton>
            <PlainButton aria-label="Aufgaben">
              <Svg width="14" height="16" viewBox="0 0 14 16" fill="none" stroke="#555" strokeWidth="2"><path d="M1 2h12v13H1z" /><path d="M4 8l2.500 3L10 6M5 1.500h4" /></Svg>
            </PlainButton>
            <PlainButton aria-label="Mehr">
              <Svg width="20" height="4" viewBox="0 0 20 4" fill="#555"><circle cx="2" cy="2" r="2" /><circle cx="10" cy="2" r="2" /><circle cx="18" cy="2" r="2" /></Svg>
            </PlainButton>
          </ModuleBar>
        </Sidebar>
        <ListColumn />
        <Reading>
          <time>19:13</time>
          <Chevron down size={12} />
        </Reading>
      </Workspace>
      <StatusBar>
        <span>Filter angewendet</span>
        <Spacer />
        <ConnectionState>Verbunden</ConnectionState>
        <ViewButton $on aria-label="Normalansicht">
          <Svg width="14" height="13" viewBox="0 0 14 13" fill="none" stroke="#555"><path d="M.5.5h13v12H.5zM3.500.5v12" /></Svg>
        </ViewButton>
        <ViewButton aria-label="Leseansicht">
          <Svg width="13" height="13" viewBox="0 0 13 13" fill="none" stroke="#555"><path d="M.5.5h5l1 1 1-1h5v10h-5l-1 2-1-2h-5zM6.500 1v11M2 3.500h3M2 5.500h3M2 7.500h3M8 3.500h3M8 5.500h3M8 7.500h3" /></Svg>
        </ViewButton>
        <ZoomButton aria-label="Verkleinern"><Svg width="7" height="9" viewBox="0 0 7 9"><path d="M0 4.500h7" stroke="#555" strokeWidth="2" /></Svg></ZoomButton>
        <Zoom type="range" aria-label="Zoom" min={0} max={200} defaultValue={100} />
        <PlainButton aria-label="Vergrößern"><Svg width="9" height="9" viewBox="0 0 9 9"><path d="M0 4.500h9M4.500 0v9" stroke="#555" strokeWidth="2" /></Svg></PlainButton>
        <ZoomLevel>100 %</ZoomLevel>
      </StatusBar>
      <TaskBar>
        <StartButton $w={58} aria-label="Start"><StartOrb /></StartButton>
        <TaskButton $w={62} aria-label="Chrome"><Chrome /></TaskButton>
        <TaskButton $w={62} aria-label="PowerPoint"><OfficeLogo letter="P" color="#c2391f" /></TaskButton>
        <TaskButton $w={62} aria-label="Excel"><OfficeLogo letter="X" color="#1f7244" /></TaskButton>
        <TaskButton $w={62} aria-label="OneNote"><OfficeLogo letter="N" color="#7b2a7a" /></TaskButton>
        <TaskButton $w={53} $active aria-label="Outlook"><OfficeLogo letter="O" color="#2464ba" /></TaskButton>
        <TaskButton $w={64} aria-label="Word"><OfficeLogo letter="W" color="#2b4b94" /></TaskButton>
        <Spacer />
        <Tray>
          <PlainButton aria-label="Ausgeblendete Symbole"><Svg width="8" height="5" viewBox="0 0 8 5"><path d="M0 5h8L4 0z" fill="#fff" /></Svg></PlainButton>
          <PlainButton aria-label="Lautstärke">
            <Svg width="17" height="15" viewBox="0 0 17 15">
              <path d="M1 4.500h3l5-4v14l-5-4H1z" fill="#fff" />
              <path d="M11 5c1 1.500 1 3.500 0 5M13 3.500c2 2 2 6 0 8M15 2c3 3 3 8 0 11" fill="none" stroke="#fff" />
            </Svg>
          </PlainButton>
        </Tray>
        <ShowDesktop aria-label="Desktop anzeigen" />
      </TaskBar>
      <Watermark width="76" height="68" viewBox="0 0 76 68" fill="#ffffff" fillOpacity=".5" stroke="#b5b5b5" fillRule="evenodd">
        <path d="M4 4C14-3 28 8 36 28L44 50 36 62C18 50-8 20 4 4zM8 8c-6 10 10 36 26 48C38 38 20 8 8 8z" />
        <path d="M75 17c-14-8-42 8-46 36-1 10 6 15 14 13 16-4 30-34 32-49zM69 19C62 32 50 56 38 60c-6-14 14-40 31-41z" />
        <path d="M6 54c8-4 28-6 42-2-8 14-32 18-40 12-3-3-4-7-2-10z" />
      </Watermark>
      <MessagePane />
      <PropertiesDialog />
    </Screen>
  </>
);

const ChoiceSlot = styled.div`
  padding: 7px 0 0 4px;
`;

const SearchSlot = styled.div`
  display: flex;
  flex-direction: column;
  gap: 3px;
  padding-left: 4px;
  margin-top: -2px;
`;

const ConnectionState = styled.span`
  margin-right: 18px;
`;

const ZoomButton = styled(PlainButton)`
  margin-left: 4px;
`;

const Tray = styled.div`
  display: flex;
  align-items: center;
  gap: 12px;
`;

export default App;
